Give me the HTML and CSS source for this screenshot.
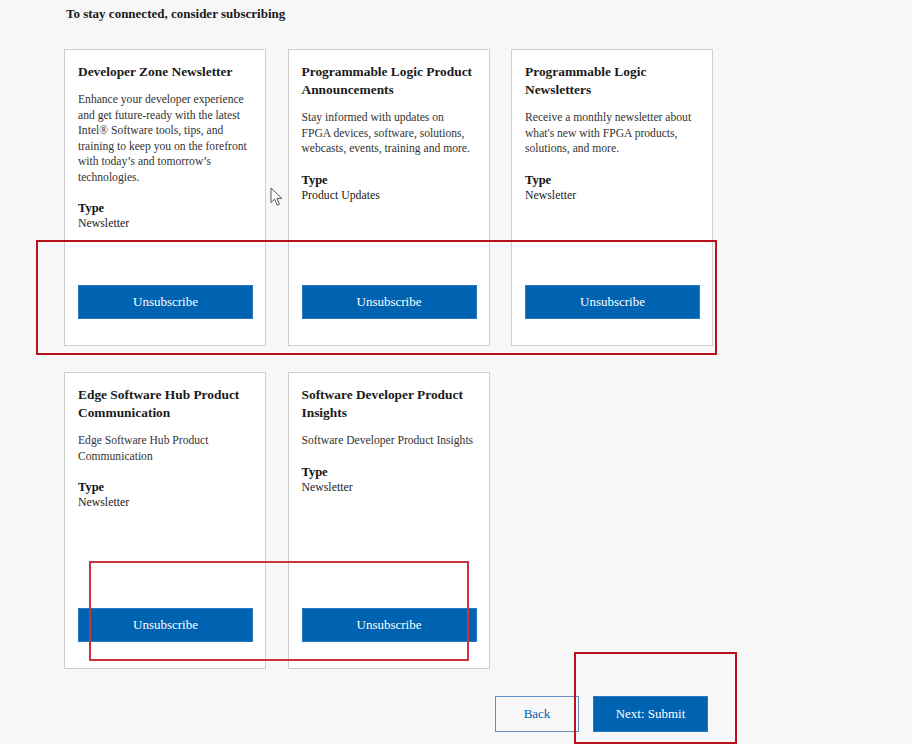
FILE: index.html
```html
<!DOCTYPE html>
<html lang="en">
<head>
  <meta charset="UTF-8" />
  <meta name="viewport" content="width=device-width, initial-scale=1.0" />
  <title>Subscriptions</title>
  <link rel="stylesheet" href="styles.css">
</head>

<body>
  <div class="page">
    <h3 class="intro">To stay connected, consider subscribing</h3>

    <div class="card-grid">
      <div class="card">
        <h4>Developer Zone Newsletter</h4>
        <p class="desc">Enhance your developer experience and get future-ready with the latest Intel® Software tools, tips, and training to keep you on the forefront with today’s and tomorrow’s technologies.</p>
        <p class="type"><strong>Type</strong><br>Newsletter</p>
        <button class="unsub-btn">Unsubscribe</button>
      </div>

      <div class="card">
        <h4>Programmable Logic Product Announcements</h4>
        <p class="desc">Stay informed with updates on FPGA devices, software, solutions, webcasts, events, training and more.</p>
        <p class="type"><strong>Type</strong><br>Product Updates</p>
        <button class="unsub-btn">Unsubscribe</button>
      </div>

      <div class="card">
        <h4>Programmable Logic Newsletters</h4>
        <p class="desc">Receive a monthly newsletter about what's new with FPGA products, solutions, and more.</p>
        <p class="type"><strong>Type</strong><br>Newsletter</p>
        <button class="unsub-btn">Unsubscribe</button>
      </div>

      <div class="card">
        <h4>Edge Software Hub Product Communication</h4>
        <p class="desc">Edge Software Hub Product Communication</p>
        <p class="type"><strong>Type</strong><br>Newsletter</p>
        <button class="unsub-btn">Unsubscribe</button>
      </div>

      <div class="card">
        <h4>Software Developer Product Insights</h4>
        <p class="desc">Software Developer Product Insights</p>
        <p class="type"><strong>Type</strong><br>Newsletter</p>
        <button class="unsub-btn">Unsubscribe</button>
      </div>
    </div>

    <div class="actions">
      <button class="back-btn">Back</button>
      <button class="next-btn">Next: Submit</button>
    </div>
  </div>

  <!-- annotation boxes drawn over the screenshot -->
  <div class="mark mark-row1"></div>
  <div class="mark mark-row2"></div>
  <div class="mark mark-submit"></div>

  <svg class="cursor" width="14" height="20" viewBox="0 0 14 20">
    <path d="M1 1 L1 15.5 L4.6 12.2 L7.2 18.2 L9.4 17.2 L6.9 11.4 L11.8 11.4 Z" fill="#ffffff" stroke="#555" stroke-width="1" stroke-linejoin="round"/>
  </svg>
</body>
</html>
```

FILE: styles.css
```css
:root {
  --blue: #0063b1;
  --mark: #b5121b;
  --page-bg: #f7f7f7;
}

body {
  margin: 0;
  background: var(--page-bg);
  font-family: "Liberation Serif", "Times New Roman", serif;
  color: #222;
  position: relative;
  min-height: 744px;
  overflow: hidden;
}

.page {
  padding: 6px 0 0 64px;
}

.intro {
  margin: 0 0 28px 2px;
  font-size: 13px;
  line-height: 15px;
  font-weight: bold;
  color: #1a1a1a;
}

.card-grid {
  display: grid;
  grid-template-columns: repeat(3, 202px);
  column-gap: 21.5px;
  row-gap: 26px;
  width: 649px;
}

.card {
  box-sizing: border-box;
  height: 297px;
  background: #fff;
  border: 1px solid #cfcfcf;
  padding: 13px 12px 26px 13px;
  display: flex;
  flex-direction: column;
}

.card h4 {
  margin: 0;
  font-size: 13.4px;
  line-height: 18px;
  font-weight: bold;
  color: #1a1a1a;
}

.card .desc {
  margin: 11px 2px 0 0;
  font-size: 11.6px;
  line-height: 15.5px;
  color: #333;
}

.card .type {
  margin: 16px 0 0;
  font-size: 11.8px;
  line-height: 15px;
  color: #222;
}

.card .type strong {
  font-size: 12.5px;
  color: #111;
}

.unsub-btn {
  margin-top: auto;
  width: 100%;
  height: 34px;
  background: var(--blue);
  color: #fff;
  border: 1px solid #2a78bd;
  font-family: inherit;
  font-size: 13px;
  cursor: pointer;
}

.actions {
  width: 644px;
  display: flex;
  justify-content: flex-end;
  gap: 14px;
  margin-top: 27px;
}

.back-btn,
.next-btn {
  height: 36px;
  font-family: inherit;
  font-size: 13px;
  cursor: pointer;
}

.back-btn {
  width: 84px;
  background: transparent;
  color: var(--blue);
  border: 1px solid #5f8fc4;
}

.next-btn {
  width: 115px;
  background: var(--blue);
  color: #fff;
  border: 1px solid #2a78bd;
}

.mark {
  position: absolute;
  border: 2px solid var(--mark);
  pointer-events: none;
}

.mark-row1 {
  left: 36px;
  top: 240px;
  width: 677px;
  height: 111px;
}

.mark-row2 {
  left: 89px;
  top: 561px;
  width: 376px;
  height: 96px;
  border-color: #cc3540;
}

.mark-submit {
  left: 574px;
  top: 652px;
  width: 159px;
  height: 88px;
}

.cursor {
  position: absolute;
  left: 270px;
  top: 187px;
}
```
